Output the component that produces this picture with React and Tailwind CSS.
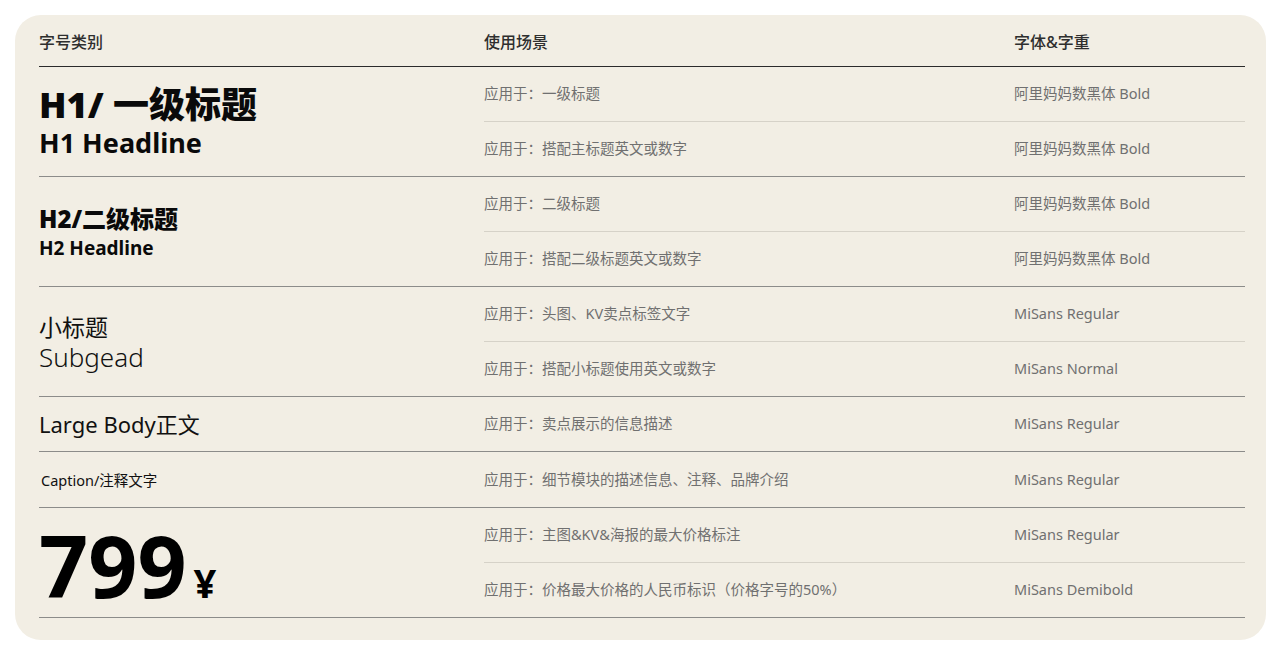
import React from "react";

const FONT = { fontFamily: '"Noto Sans", "Noto Sans CJK SC", sans-serif' };

const groups = [
  {
    left: (
      <div className="flex flex-col text-[#0a0a0a] pt-[2px]">
        <div className="text-[36px] font-black leading-[40px]">H1/ 一级标题</div>
        <div className="text-[27px] font-bold leading-[36px]">H1 Headline</div>
      </div>
    ),
    rows: [
      ["应用于：一级标题", "阿里妈妈数黑体 Bold"],
      ["应用于：搭配主标题英文或数字", "阿里妈妈数黑体 Bold"],
    ],
  },
  {
    left: (
      <div className="flex flex-col text-[#0a0a0a]">
        <div className="text-[24px] font-black leading-[32px]">H2/二级标题</div>
        <div className="text-[19px] font-bold leading-[26px]">H2 Headline</div>
      </div>
    ),
    rows: [
      ["应用于：二级标题", "阿里妈妈数黑体 Bold"],
      ["应用于：搭配二级标题英文或数字", "阿里妈妈数黑体 Bold"],
    ],
  },
  {
    left: (
      <div className="flex flex-col text-[#111]">
        <div className="text-[23px] font-normal leading-[30px]">小标题</div>
        <div className="text-[26px] font-light leading-[30px]">Subgead</div>
      </div>
    ),
    rows: [
      ["应用于：头图、KV卖点标签文字", "MiSans Regular"],
      ["应用于：搭配小标题使用英文或数字", "MiSans Normal"],
    ],
  },
  {
    left: <div className="text-[22px] leading-[30px] text-[#111]">Large Body正文</div>,
    rows: [["应用于：卖点展示的信息描述", "MiSans Regular"]],
  },
  {
    left: <div className="pl-[2px] text-[14.5px] leading-[20px] text-[#111]">Caption/注释文字</div>,
    rows: [["应用于：细节模块的描述信息、注释、品牌介绍", "MiSans Regular"]],
    tall: true,
  },
  {
    left: (
      <div className="flex items-baseline text-black pt-[4px]">
        <span className="text-[86px] font-bold leading-[96px]">799</span>
        <span className="text-[40px] font-bold leading-[40px] ml-[7px]">¥</span>
      </div>
    ),
    rows: [
      ["应用于：主图&KV&海报的最大价格标注", "MiSans Regular"],
      ["应用于：价格最大价格的人民币标识（价格字号的50%）", "MiSans Demibold"],
    ],
  },
];

export default function App() {
  return (
    <div className="w-[1280px] h-[655px] bg-white pt-[15px] pl-[15px]" style={FONT}>
      <div className="w-[1251px] h-[625px] rounded-[26px] bg-[#f2eee4] pl-6 pr-[21px]">
        <div className="h-[52px] pt-[2px] flex items-center border-b border-[#2b2b2b] text-[16px] text-[#2e2e2e] font-medium">
          <div className="w-[445px]">字号类别</div>
          <div className="w-[530px]">使用场景</div>
          <div className="flex-1">字体&amp;字重</div>
        </div>
        {groups.map((g, gi) => (
          <div key={gi} className="flex border-b border-[#8c8c8a]">
            <div className="w-[445px] shrink-0 flex items-center">{g.left}</div>
            <div className="flex-1 flex flex-col">
              {g.rows.map((r, ri) => {
                const last = ri === g.rows.length - 1;
                return (
                  <div
                    key={ri}
                    className={
                      "flex items-center text-[14.5px] text-[#707070] " +
                      (last ? (g.tall ? "h-[55px]" : "h-[54px]") : "h-[55px] border-b border-[#d6d2c8]")
                    }
                  >
                    <div className="w-[530px] shrink-0">{r[0]}</div>
                    <div className="flex-1">{r[1]}</div>
                  </div>
                );
              })}
            </div>
          </div>
        ))}
      </div>
    </div>
  );
}
